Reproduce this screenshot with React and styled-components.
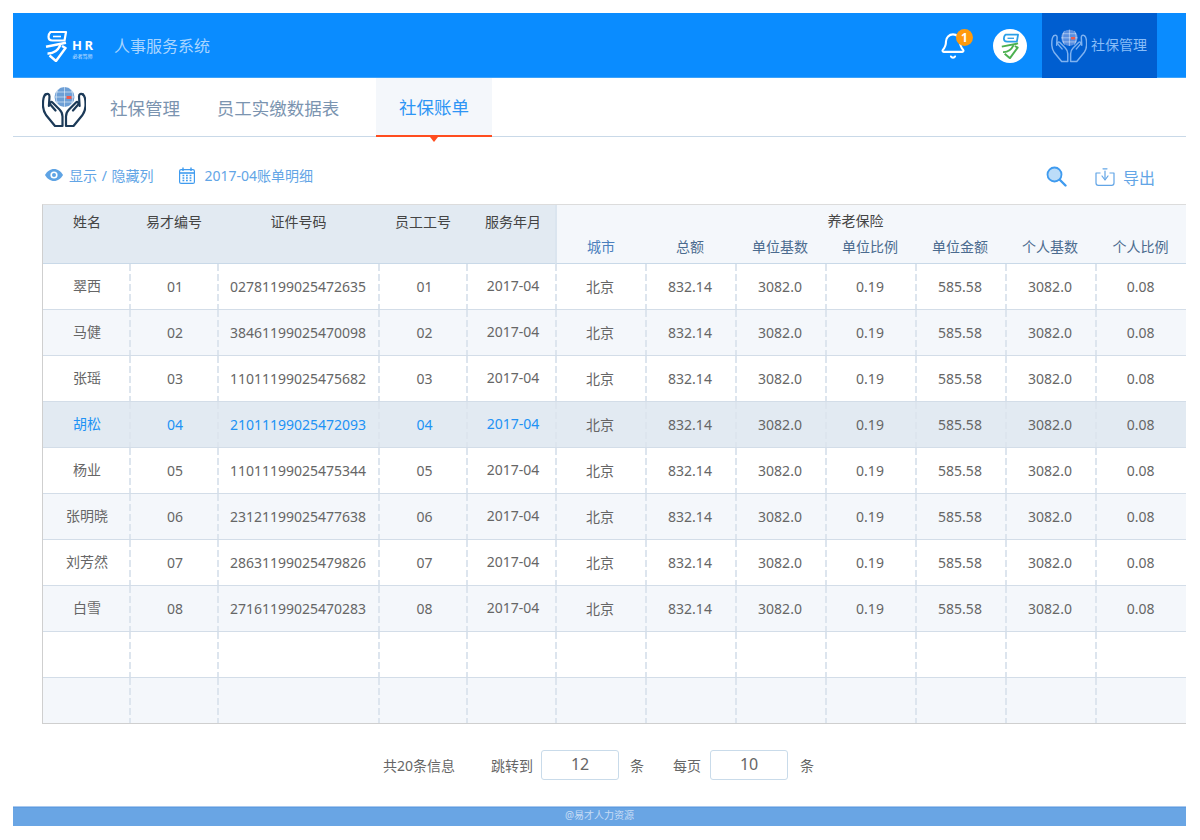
import React from 'react';
import styled, { createGlobalStyle } from 'styled-components';
import { Bell } from 'lucide-react';

const Global = createGlobalStyle`
  html, body { margin: 0; padding: 0; background: #fff; }
  body { font-family: "Noto Sans", "Noto Sans CJK SC", sans-serif; }
  * { box-sizing: border-box; }
`;

const Page = styled.div`
  width: 1200px; height: 840px; padding: 13px 14px 14px 13px;
  display: flex; flex-direction: column; overflow: hidden;
`;
const Header = styled.header`
  height: 65px; flex: none; background: #0a8cff; display: flex; align-items: stretch; justify-content: space-between;
  padding-left: 32px; padding-right: 29px; box-shadow: inset 0 -1px 0 #3da3fb;
`;
const Brand = styled.div`display: flex; align-items: center;`;
const LogoText = styled.div`
  display: flex; flex-direction: column; align-items: center; margin-left: 3px; margin-top: 5px; color: #fff; width: 23px;
`;
const LogoHR = styled.span`font: 700 13px/14px "Noto Sans", sans-serif; letter-spacing: 2.5px; margin-right: -2.5px;`;
const LogoSub = styled.span`font: 5px/7px "Noto Sans CJK SC", sans-serif; white-space: nowrap; opacity: .8;`;
const SystemName = styled.div`margin-left: 20px; color: #a9d5ff; font-size: 16px; line-height: 22px;`;
const HeaderRight = styled.div`display: flex; align-items: stretch;`;
const BellWrap = styled.div`
  position: relative; width: 28px; display: flex; align-items: center; justify-content: center; color: #fff; margin-right: 26px;
`;
const Badge = styled.span`
  position: absolute; top: 16px; right: -6px; width: 17px; height: 17px; border-radius: 50%; background: #ff9a0d; color: #fff;
  font: 700 12px/17px "Noto Sans", sans-serif; text-align: center;
`;
const Avatar = styled.div`
  width: 34px; height: 34px; border-radius: 50%; background: #fff; align-self: center; margin-right: 15px;
  display: flex; align-items: center; justify-content: center;
`;
const Module = styled.div`
  width: 115px; background: #005ed0; display: flex; align-items: center; padding-left: 9px; gap: 4px; color: #88bdf8; font-size: 14px;
  line-height: 20px;
`;
const ModuleLabel = styled.span`margin-top: -2px;`;
const SubNav = styled.nav`
  height: 59px; flex: none; display: flex; align-items: stretch; border-bottom: 1px solid #c9d9e8; padding-left: 29px;
`;
const NavIcon = styled.div`width: 44px; display: flex; align-items: center; margin-right: 24px;`;
const Tab = styled.a`
  display: flex; align-items: center; justify-content: center; font-size: 17.5px; height: 59px;
  width: ${p => p.$w}px; margin-right: ${p => p.$mr || 0}px;
  color: ${p => (p.$active ? '#2d95f5' : '#7b94b0')};
  background: ${p => (p.$active ? '#f4f7fb' : 'transparent')};
  border-bottom: ${p => (p.$active ? '2px solid #ff4d1f' : 'none')};
  position: relative;
  ${p => p.$active && `&::after { content: ''; position: absolute; left: 50%; bottom: -7px; margin-left: -4px;
    border: 4px solid transparent; border-top: 5px solid #ff4d1f; border-bottom: 0; }`}
`;
const Toolbar = styled.div`
  height: 67px; flex: none; padding: 9px 31px 0 32px; display: flex; align-items: center; justify-content: space-between;
  color: #62a5e6; font-size: 14px;
`;
const ToolGroup = styled.div`display: flex; align-items: center; margin-top: ${p => p.$mt || 0}px;`;
const ToolItem = styled.span`
  display: flex; align-items: center; gap: ${p => p.$gap || 6}px; margin-right: ${p => p.$mr || 0}px;
  font-size: ${p => p.$size || 14}px; word-spacing: 1px;
`;

const TableWrap = styled.div`margin-left: 29px; flex: none;`;
const Table = styled.table`
  width: 1143px; table-layout: fixed; border-collapse: separate; border-spacing: 0;
  border-left: 1px solid #cfcfcf; border-top: 1px solid #dcdcdc; border-bottom: 1px solid #cfcfcf;
  font-size: 14px; color: #666;
`;
const HeadCell = styled.th`
  background: #e2eaf2; color: #444; font-weight: 400; font-size: 14px; line-height: 16px; height: 59px;
  padding: 0 0 25px ${p => p.$pl || 0}px; vertical-align: middle;
  border-bottom: 1px solid #c9d9e8; white-space: nowrap;
`;
const GroupCell = styled.th`
  background: #f4f7fb; color: #444; font-weight: 400; font-size: 14px; line-height: 16px; height: 33px;
  padding: 0 32px 2px 0; border-left: 2px solid #dbe5ef;
`;
const SubHeadCell = styled.th`
  background: #f4f7fb; font-weight: 400; font-size: 14px; line-height: 16px; height: 26px; padding: 0 0 7px; white-space: nowrap;
  color: ${p => (p.$light ? '#4a7fbd' : '#4b6b8f')};
  border-bottom: 1px solid #c9d9e8; ${p => p.$first && 'border-left: 2px solid #dbe5ef;'}
`;
const Row = styled.tr`
  background: ${p => (p.$selected ? '#e2eaf2' : p.$alt ? '#f4f7fb' : '#fff')};
`;
const Cell = styled.td`
  height: ${p => (p.$last ? 45 : 46)}px; padding: 0 0 ${p => p.$pb || 0}px ${p => p.$pl || 0}px;
  text-align: center; white-space: nowrap; overflow: hidden;
  border-bottom: ${p => (p.$last ? 'none' : '1px solid #d3dde8')};
  color: ${p => (p.$blue ? '#2192f5' : '#666')};
  ${p => !p.$first && `
    background-image: repeating-linear-gradient(to bottom, #dde5ee 0 7px, transparent 7px 10px);
    background-size: 2px 100%;
    background-repeat: no-repeat;
  `}
`;
const Pager = styled.div`
  margin-top: 26px; height: 30px; flex: none; display: flex; align-items: center; color: #666; font-size: 14px; padding-left: 370px;
`;
const PagerText = styled.span`margin-right: ${p => p.$mr}px; white-space: nowrap;`;
const PagerInput = styled.div`
  width: 78px; height: 30px; border: 1px solid #c9dbea; border-radius: 3px; background: #fff; text-align: center;
  font-size: 16px; line-height: 27px; color: #666; margin-right: ${p => p.$mr}px;
`;
const Footer = styled.footer`
  margin-top: auto; height: 20px; flex: none; background: #69a5e4; border-top: 1px solid #a9c9ee;
  box-shadow: inset 0 1px 0 #5d9be0; text-align: center;
  color: #c6dcf5; font-size: 10px; line-height: 17px;
`;

const Hands = ({ stroke = '#1c3a58', globe = '#6d9fd6', size = 44, sw = 2.200 }) => (
  <svg width={size} height={size} viewBox="0 0 44 44" fill="none" style={{ display: 'block' }}>
    <circle cx="22.500" cy="12" r="10" fill={globe} />
    <g stroke="#fff" strokeWidth=".7" opacity=".75">
      <path d="M12.500 12h20M14 7h17M14 17h17M22.500 2v20M16.500 3.500c-3 5-3 12 0 17M28.500 3.500c3 5 3 12 0 17" />
    </g>
    <rect x="24.500" y="11" width="5" height="3" fill="#ef5a4c" />
    <g stroke={stroke} strokeWidth={sw} strokeLinejoin="round" strokeLinecap="round">
      <path d="M3.500 9.500C1.500 11 .8 15 1 21c.2 4 1 6 3 9l9 11h7.500v-9.500c0-3-1-5-3-7l-7-7c-1.400-1.300-3.400.6-2 2.200l5 5.800" />
      <path d="M3.500 9.500c2-1.500 4-.5 4 2l-.6 9.500" />
      <path d="M41 9.500c2 1.500 2.700 5.500 2.500 11.500-.2 4-1 6-3 9l-9 11H24v-9.500c0-3 1-5 3-7l7-7c1.400-1.300 3.400.6 2 2.200l-5 5.800" />
      <path d="M41 9.500c-2-1.500-4-.5-4 2l.6 9.500" />
    </g>
  </svg>
);

const YiLogo = ({ color = '#fff', tag, size = 32 }) => (
  <svg width={size * 0.72} height={size} viewBox="0 0 23 32" fill="none" style={{ display: 'block' }}>
    <path d="M5.500 2H21l-1.500 8.500H7.500c-2.500 0-4-1.500-4-3.800C3.500 4.500 4.500 3 5.500 2z" stroke={color} strokeWidth="2.200" strokeLinejoin="round" />
    <path d="M8 6.500h8" stroke={color} strokeWidth="1.600" />
    <path d="M1 16.800l20-4" stroke={tag || color} strokeWidth="2.400" />
    <path d="M2.500 23.500c5 .3 10-2.500 13-8.500M4.500 25.500l6.500 5.500 9.500-13-3.500-2" stroke={tag || color} strokeWidth="2.400" strokeLinejoin="round" />
  </svg>
);

const Eye = () => (
  <svg width="18" height="12" viewBox="0 0 18 12">
    <path d="M0 6c2-3.600 5.200-6 9-6s7 2.400 9 6c-2 3.600-5.200 6-9 6S2 9.600 0 6z" fill="#5ea3e4" />
    <circle cx="9" cy="6" r="3.600" fill="#fff" />
    <circle cx="9" cy="6" r="2" fill="#5ea3e4" />
  </svg>
);
const CalendarIcon = () => (
  <svg width="16" height="17" viewBox="0 0 16 17" fill="none">
    <rect x=".6" y="2.600" width="14.800" height="13.800" rx="1.500" stroke="#3f9bef" strokeWidth="1.200" />
    <path d="M1 6h14" stroke="#3f9bef" strokeWidth="1.600" />
    <path d="M4 .5v3.500M12 .5v3.500" stroke="#3f9bef" strokeWidth="1.400" />
    <path d="M3.500 8.500h1.800M7 8.500h1.800M10.600 8.500h1.800M3.500 11h1.800M7 11h1.800M10.600 11h1.800M3.500 13.500h1.800M7 13.500h1.800M10.600 13.500h1.800" stroke="#3f9bef" strokeWidth="1.300" />
  </svg>
);
const SearchIcon = () => (
  <svg width="21" height="21" viewBox="0 0 21 21" fill="none">
    <circle cx="8.500" cy="8.500" r="7" fill="#bcdcf8" stroke="#3f9bef" strokeWidth="1.800" />
    <path d="M14 14l5.500 5.500" stroke="#3f9bef" strokeWidth="2.400" strokeLinecap="round" />
  </svg>
);
const ExportIcon = () => (
  <svg width="20" height="18" viewBox="0 0 20 18" fill="none" stroke="#62a5e6" strokeWidth="1.200" strokeLinejoin="round">
    <path d="M5.500 5H1v10c0 1.500.8 2.300 2.300 2.300h13.400c1.500 0 2.300-.8 2.300-2.300V5h-4.500" />
    <path d="M8 .8h4M10 3v7M7 8l3 4 3-4" strokeLinecap="round" />
  </svg>
);

const people = [
  ['翠西', '01', '02781199025472635', '01'],
  ['马健', '02', '38461199025470098', '02'],
  ['张瑶', '03', '11011199025475682', '03'],
  ['胡松', '04', '21011199025472093', '04'],
  ['杨业', '05', '11011199025475344', '05'],
  ['张明晓', '06', '23121199025477638', '06'],
  ['刘芳然', '07', '28631199025479826', '07'],
  ['白雪', '08', '27161199025470283', '08'],
];
const rest = ['北京', '832.14', '3082.0', '0.19', '585.58', '3082.0', '0.08'];
const subHeads = ['城市', '总额', '单位基数', '单位比例', '单位金额', '个人基数', '个人比例'];
const widths = [86, 88, 161, 88, 89, 90, 90, 90, 90, 90, 90, 91];
const bodyPads = [2, 4, 1, 5];
const headPads = [2, 2, 2, 2, 5];

export default function App() {
  return (
    <>
      <Global />
      <Page>
        <Header>
          <Brand>
            <YiLogo />
            <LogoText>
              <LogoHR>HR</LogoHR>
              <LogoSub>必者笃师</LogoSub>
            </LogoText>
            <SystemName>人事服务系统</SystemName>
          </Brand>
          <HeaderRight>
            <BellWrap>
              <Bell size={28} strokeWidth={1.8} />
              <Badge>1</Badge>
            </BellWrap>
            <Avatar><YiLogo color="#2a9fe8" tag="#4cb04f" size={26} /></Avatar>
            <Module>
              <Hands stroke="#7fb2f0" globe="#5a8fe0" size={36} sw={1.800} />
              <ModuleLabel>社保管理</ModuleLabel>
            </Module>
          </HeaderRight>
        </Header>
        <SubNav>
          <NavIcon><Hands /></NavIcon>
          <Tab $w={70} $mr={36}>社保管理</Tab>
          <Tab $w={124} $mr={36}>员工实缴数据表</Tab>
          <Tab $w={116} $active>社保账单</Tab>
        </SubNav>
        <Toolbar>
          <ToolGroup>
            <ToolItem $mr={25}><Eye />显示 / 隐藏列</ToolItem>
            <ToolItem $gap={10}><CalendarIcon />2017-04账单明细</ToolItem>
          </ToolGroup>
          <ToolGroup $mt={3}>
            <ToolItem $mr={28}><SearchIcon /></ToolItem>
            <ToolItem $gap={8} $size={16}><ExportIcon />导出</ToolItem>
          </ToolGroup>
        </Toolbar>
        <TableWrap>
          <Table>
            <colgroup>
              {widths.map((w, i) => <col key={i} style={{ width: w }} />)}
            </colgroup>
            <thead>
              <tr>
                {['姓名', '易才编号', '证件号码', '员工工号', '服务年月'].map((h, i) => (
                  <HeadCell key={h} rowSpan={2} $pl={headPads[i]}>{h}</HeadCell>
                ))}
                <GroupCell colSpan={7}>养老保险</GroupCell>
              </tr>
              <tr>
                {subHeads.map((h, i) => <SubHeadCell key={h} $first={i === 0} $light={i === 0}>{h}</SubHeadCell>)}
              </tr>
            </thead>
            <tbody>
              {people.map((p, r) => (
                <Row key={p[0]} $alt={r % 2 === 1} $selected={r === 3}>
                  {p.map((v, i) => <Cell key={i} $first={i === 0} $pl={bodyPads[i]} $pb={i === 0 ? 3 : 1} $blue={r === 3}>{v}</Cell>)}
                  <Cell $blue={r === 3} $pb={2} $pl={5}>2017-04</Cell>
                  {rest.map((v, i) => <Cell key={i} $pb={i === 0 ? 2 : 1}>{v}</Cell>)}
                </Row>
              ))}
              {[0, 1].map(r => (
                <Row key={r} $alt={r === 1}>
                  {widths.map((_, i) => <Cell key={i} $first={i === 0} $last={r === 1} />)}
                </Row>
              ))}
            </tbody>
          </Table>
        </TableWrap>
        <Pager>
          <PagerText $mr={36}>共20条信息</PagerText>
          <PagerText $mr={8}>跳转到</PagerText>
          <PagerInput $mr={11}>12</PagerInput>
          <PagerText $mr={29}>条</PagerText>
          <PagerText $mr={9}>每页</PagerText>
          <PagerInput $mr={12}>10</PagerInput>
          <PagerText $mr={0}>条</PagerText>
        </Pager>
        <Footer>@易才人力资源</Footer>
      </Page>
    </>
  );
}
